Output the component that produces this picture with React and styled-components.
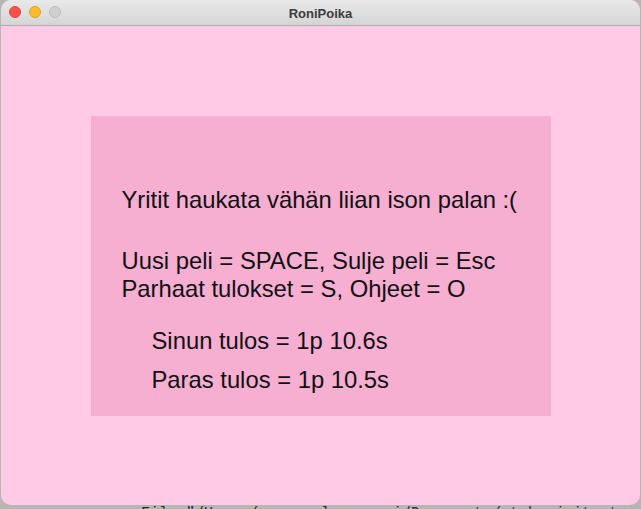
import styled, { createGlobalStyle } from "styled-components";

const GlobalStyle = createGlobalStyle`
  html, body {
    margin: 0;
    padding: 0;
    background: #bab4b4;
    overflow: hidden;
  }
`;

const Desktop = styled.div`
  width: 641px;
  height: 509px;
  overflow: hidden;
`;

const Window = styled.div`
  width: 639px;
  height: 505px;
  margin-left: 1px;
  display: flex;
  flex-direction: column;
  border-radius: 10px;
  overflow: hidden;
  background: #ffcae6;
`;

const TitleBar = styled.div`
  height: 25px;
  flex-shrink: 0;
  position: relative;
  display: flex;
  align-items: center;
  justify-content: center;
  background: linear-gradient(#e9e9e9, #d5d5d5);
  border-bottom: 1px solid #aeaeae;
`;

const Lights = styled.div`
  position: absolute;
  left: 8px;
  top: 6px;
  display: flex;
  gap: 8px;
`;

const Light = styled.span`
  width: 12px;
  height: 12px;
  border-radius: 50%;
  box-sizing: border-box;
  background: ${(p) => p.color};
  border: 1px solid ${(p) => p.edge};
`;

const Title = styled.div`
  font-family: "Liberation Sans", Arial, sans-serif;
  font-weight: bold;
  font-size: 13px;
  color: #3b3b3b;
  padding-top: 1px;
`;

const Canvas = styled.div`
  flex: 1;
  display: flex;
  align-items: center;
  justify-content: center;
  padding-top: 1px;
`;

const Panel = styled.div`
  width: 460px;
  height: 300px;
  box-sizing: border-box;
  background: #f6aed1;
  padding: 70px 0 0 31px;
  font-family: "Liberation Sans", Arial, sans-serif;
  font-size: 23.8px;
  line-height: 28px;
  color: #111;
`;

const Line = styled.div`
  margin-top: ${(p) => p.gap || 0}px;
  white-space: nowrap;
`;

const Scores = styled.div`
  margin-top: 24px;
  padding-left: 30px;
  display: flex;
  flex-direction: column;
  gap: 11px;
`;

const Console = styled.div`
  font-family: "Liberation Mono", monospace;
  font-size: 15px;
  line-height: 15px;
  color: #2a2a2a;
  padding-left: 141px;
  margin-top: 1px;
  white-space: nowrap;
`;

const App = () => {
  return (
    <Desktop>
      <GlobalStyle />
      <Window>
        <TitleBar>
          <Lights>
            <Light color="#fe4f4a" edge="#e0433e" />
            <Light color="#fdbb2d" edge="#dfa023" />
            <Light color="#d0d0d0" edge="#bcbcbc" />
          </Lights>
          <Title>RoniPoika</Title>
        </TitleBar>
        <Canvas>
          <Panel>
            <Line>Yritit haukata vähän liian ison palan :(</Line>
            <Line gap={33}>Uusi peli = SPACE, Sulje peli = Esc</Line>
            <Line>Parhaat tulokset = S, Ohjeet = O</Line>
            <Scores>
              <Line>Sinun tulos = 1p 10.6s</Line>
              <Line>Paras tulos = 1p 10.5s</Line>
            </Scores>
          </Panel>
        </Canvas>
      </Window>
      <Console>
        File "/Users/saarasalmensaari/Documents/ot-harjoitustyo/src/main/ui/main.py"
      </Console>
    </Desktop>
  );
};

export default App;
